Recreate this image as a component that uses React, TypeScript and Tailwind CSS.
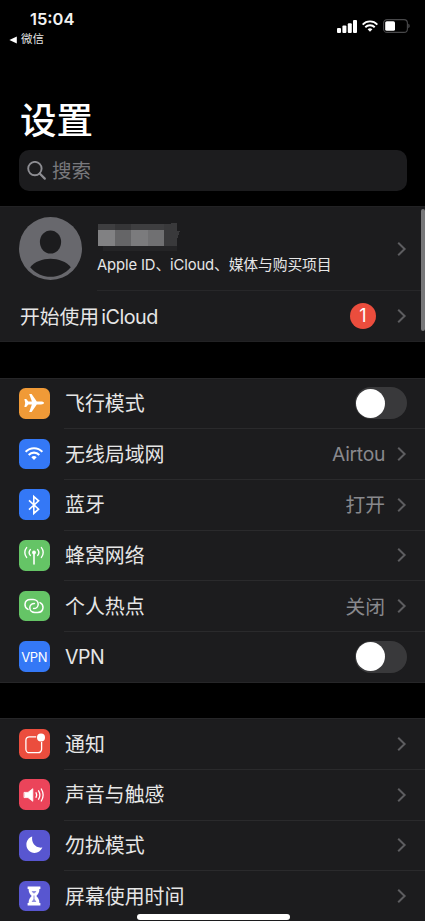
import React from "react";

type RowItem = {
  label: string;
  icon: React.ReactNode;
  color: string;
  value?: string;
  toggle?: boolean;
};

function Chevron() {
  return (
    <svg className="h-[16px] w-[10px] flex-none" viewBox="0 0 10 16" fill="none">
      <path d="M1.2 1.8L7.6 8L1.2 14.2" stroke="#5d5d60" strokeWidth="2" />
    </svg>
  );
}

function Toggle() {
  return (
    <div className="flex h-8 w-[52px] flex-none items-center rounded-full bg-[#39393b] pl-[1px]">
      <div className="size-[29px] rounded-full bg-white" />
    </div>
  );
}

function WifiArcs({ className }: { className: string }) {
  return (
    <svg className={className} viewBox="0 0 18 13" fill="none">
      <path d="M0.7 4.9A11.4 11.4 0 0 1 17.3 4.9" stroke="white" strokeWidth="2.1" />
      <path d="M3.7 7.9A7.4 7.4 0 0 1 14.3 7.9" stroke="white" strokeWidth="2.1" />
      <path d="M6.3 10.2A3.9 3.9 0 0 1 11.7 10.2L9 12.9Z" fill="white" />
    </svg>
  );
}

const airplane = (
  <svg className="size-[30px]" viewBox="0 0 30 30" fill="white">
    <path d="M25 15C25 14.2 23.7 13.6 22 13.6H17.8L12.6 6H10.2L12.9 13.6H9.3L7.2 11.1H5.4L6.2 15L5.4 18.9H7.2L9.3 16.4H12.9L10.2 24H12.6L17.8 16.4H22C23.7 16.4 25 15.8 25 15Z" />
  </svg>
);

const bluetooth = (
  <svg className="size-[30px]" viewBox="0 0 30 30" fill="none">
    <path d="M10 10.4L19.6 19.2L14.8 23.4V6.6L19.6 10.8L10 19.6" stroke="white" strokeWidth="1.6" />
  </svg>
);

const cellular = (
  <svg className="size-[30px]" viewBox="0 0 30 30" fill="none" stroke="white" strokeWidth="1.4" strokeLinecap="round">
    <circle cx="15" cy="12.5" r="1.9" fill="white" stroke="none" />
    <path d="M15 13V24" strokeWidth="1.6" />
    <path d="M11.3 9.6A4.6 4.6 0 0 0 11.3 15.4M18.7 9.6A4.6 4.6 0 0 1 18.7 15.4" />
    <path d="M7.6 7.6A7.6 7.6 0 0 0 7.6 17.4M22.4 7.6A7.6 7.6 0 0 1 22.4 17.4" />
  </svg>
);

const hotspot = (
  <svg className="size-[30px]" viewBox="0 0 30 30" fill="none" stroke="white" strokeWidth="1.5" strokeLinecap="round">
    <path d="M9 18.4C7 17.4 5.9 15.6 6 13.4C6.2 10.5 8.5 8.6 11.4 8.6H14.2C17 8.6 19.2 10.6 19.2 13.2C19.2 15.8 17 17.6 14.6 17.6" />
    <path d="M21 11.6C23 12.6 24.1 14.4 24 16.6C23.8 19.5 21.5 21.4 18.6 21.4H15.8C13 21.4 10.8 19.4 10.8 16.8C10.8 14.2 13 12.4 15.4 12.4" />
  </svg>
);

const notification = (
  <svg className="size-[30px]" viewBox="0 0 30 30" fill="none">
    <path d="M17.2 7.8H10.4A3.5 3.5 0 0 0 6.9 11.3V20.2A3.5 3.5 0 0 0 10.4 23.7H19.1A3.5 3.5 0 0 0 22.6 20.2V13" stroke="white" strokeWidth="1.3" />
    <circle cx="22" cy="8.5" r="4" fill="white" />
  </svg>
);

const sound = (
  <svg className="size-[30px]" viewBox="0 0 30 30" fill="none" stroke="white" strokeLinecap="round">
    <path d="M5.4 12.4H9L13.8 8.7V21.3L9 17.6H5.4Z" fill="white" stroke="white" strokeWidth="0.8" strokeLinejoin="round" />
    <path d="M17 12.7A4.5 4.5 0 0 1 17 17.3" strokeWidth="1.3" />
    <path d="M19.6 10.8A8 8 0 0 1 19.6 19.2" strokeWidth="1.3" />
    <path d="M22.3 9A11.5 11.5 0 0 1 22.3 21" strokeWidth="1.3" />
  </svg>
);

const moon = (
  <svg className="size-[30px]" viewBox="0 0 30 30" fill="white">
    <path d="M13.2 6.6C12.2 12.8 16.4 18.6 23.4 17.6C21.8 21.2 19 23 15.6 23C11 23 7.4 19.4 7.4 14.8C7.4 11 9.6 7.8 13.2 6.6Z" />
  </svg>
);

const hourglass = (
  <svg className="size-[30px]" viewBox="0 0 30 30" fill="white">
    <path d="M8.6 5.4H21.4V8H20.4C20.4 11.8 18.9 13.2 17.3 15C18.9 16.8 20.4 18.2 20.4 22H21.4V24.6H8.6V22H9.6C9.6 18.2 11.1 16.8 12.7 15C11.1 13.2 9.6 11.8 9.6 8H8.6Z" />
    <path d="M12.6 10H17.4L15.9 12.2H14.1ZM14.5 14.6H15.5V18L17.4 21H12.6L14.5 18Z" fill="#5856d0" opacity="0.65" />
  </svg>
);

const network: RowItem[] = [
  { label: "飞行模式", icon: airplane, color: "bg-[#f09a37]", toggle: true },
  { label: "无线局域网", icon: <WifiArcs className="h-[13px] w-[18px]" />, color: "bg-[#3478f6]", value: "Airtou" },
  { label: "蓝牙", icon: bluetooth, color: "bg-[#3478f6]", value: "打开" },
  { label: "蜂窝网络", icon: cellular, color: "bg-[#65c466]" },
  { label: "个人热点", icon: hotspot, color: "bg-[#65c466]", value: "关闭" },
  {
    label: "VPN",
    icon: <span className="pt-[1px] text-[13px] leading-none tracking-[-0.3px] text-white">VPN</span>,
    color: "bg-[#3478f6]",
    toggle: true,
  },
];

const general: RowItem[] = [
  { label: "通知", icon: notification, color: "bg-[#eb4d3d]" },
  { label: "声音与触感", icon: sound, color: "bg-[#eb445a]" },
  { label: "勿扰模式", icon: moon, color: "bg-[#5856d0]" },
  { label: "屏幕使用时间", icon: hourglass, color: "bg-[#5856d0]" },
];

function Row({ item, last }: { item: RowItem; last: boolean }) {
  return (
    <div className={`flex pl-[19px] ${last ? "h-[50px]" : "h-[50.7px]"}`}>
      <div className={`mt-[9.5px] flex size-[30.5px] flex-none items-center justify-center rounded-[6.5px] ${item.color}`}>
        {item.icon}
      </div>
      <div
        className={`ml-[14.5px] flex flex-1 items-center pr-[18px] pl-[1px] ${last ? "" : "border-b border-[#2a2a2c]"}`}
      >
        <span
          className={`flex-1 pt-[1px] leading-6 text-[#e6e6e6] ${
            item.label === "VPN" ? "text-[19.5px] tracking-[-0.4px]" : "text-[19.9px]"
          }`}
        >
          {item.label}
        </span>
        {item.value && (
          <span
            className={`mr-[12px] leading-6 text-[#89898d] ${
              item.value === "Airtou" ? "text-[19.3px] tracking-[-0.3px]" : "pt-[1px] text-[19.8px]"
            }`}
          >
            {item.value}
          </span>
        )}
        {item.toggle ? <Toggle /> : <Chevron />}
      </div>
    </div>
  );
}

function Group({ items }: { items: RowItem[] }) {
  return (
    <section className="border-y border-[#262628] bg-[#1c1c1e]">
      {items.map((item, index) => (
        <Row key={item.label} item={item} last={index === items.length - 1} />
      ))}
    </section>
  );
}

function StatusBar() {
  return (
    <div className="flex h-[50px] justify-between pr-[15px] pl-[9px]">
      <div className="pt-[9px]">
        <div className="pl-[21px] text-[16.5px] leading-5 font-semibold text-[#f2f2f2]">15:04</div>
        <div className="mt-[3px] flex items-center gap-[4px] text-[11.5px] leading-[15px] text-[#e6e6e6]">
          <svg className="h-[8px] w-[8px]" viewBox="0 0 8 8" fill="white">
            <path d="M0.4 4L7.8 0.6V7.4Z" />
          </svg>
          微信
        </div>
      </div>
      <div className="mt-[19px] flex h-[14px] items-center gap-[5px]">
        <svg className="h-[13px] w-[20px]" viewBox="0 0 20 13" fill="white">
          <rect x="0" y="8" width="4" height="5" rx="1" />
          <rect x="5.4" y="5.6" width="4" height="7.4" rx="1" />
          <rect x="10.8" y="3.2" width="4" height="9.8" rx="1" />
          <rect x="16" y="0" width="4" height="13" rx="1" />
        </svg>
        <WifiArcs className="h-[12px] w-[16px]" />
        <svg className="h-[14px] w-[27px]" viewBox="0 0 27 14" fill="none">
          <rect x="0.6" y="0.6" width="23.8" height="12.8" rx="3.5" stroke="#48484a" strokeWidth="1.1" />
          <rect x="2.2" y="2.2" width="9.8" height="9.6" rx="1.6" fill="white" />
          <path d="M25.4 4.8C27 5.4 27 8.6 25.4 9.2Z" fill="#58585a" />
        </svg>
      </div>
    </div>
  );
}

export default function App() {
  return (
    <main className="relative h-[921px] w-[425px] overflow-hidden bg-black font-['Inter','Noto_Sans_CJK_SC',sans-serif]">
      <StatusBar />

      <header className="h-[156px] pt-[49px] pr-[18px] pl-[19px]">
        <h1 className="pl-[1px] text-[36.5px] leading-[44px] font-medium text-white">设置</h1>
        <div className="mt-[7px] flex h-[41px] items-center rounded-[10px] bg-[#1c1c1e] pl-[8px]">
          <svg className="size-[20px]" viewBox="0 0 20 20" fill="none" stroke="#8d8d92" strokeWidth="1.9">
            <circle cx="7.9" cy="7.6" r="6.7" />
            <path d="M12.7 12.5L17.8 17.6" strokeWidth="2.2" strokeLinecap="round" />
          </svg>
          <span className="ml-[5px] pt-[1px] text-[19.5px] leading-6 text-[#78787c]">搜索</span>
        </div>
      </header>

      {/* Account */}
      <section className="h-[136px] border-y border-[#222224] bg-[#1c1c1e] pl-[19px]">
        <div className="flex h-[84px]">
          <svg className="mt-[10px] size-[63px] flex-none" viewBox="0 0 63 63">
            <circle cx="31.5" cy="31.5" r="31.5" fill="#68686d" />
            <ellipse cx="31.5" cy="25" rx="10.6" ry="11.6" fill="#1c1c1e" />
            <path d="M11.2 50.2C20 38.8 43 38.8 51.8 50.2C41 63 22 63 11.2 50.2Z" fill="#1c1c1e" />
          </svg>
          <div className="ml-[15px] flex flex-1 items-center border-b border-[#272729] pr-[18px]">
            <div className="h-full flex-1 pt-[16px]">
              <svg className="ml-[1px] h-[29px] w-[83px]" viewBox="0 0 83 29" shapeRendering="crispEdges">
                <path d="M0 1H66V7H0Z" fill="#3e3e40" />
                <path d="M17 1H33V7H17Z" fill="#353537" />
                <path d="M0 7H17V23H0Z" fill="#818183" />
                <path d="M17 7H33V23H17Z" fill="#656567" />
                <path d="M33 7H50V23H33Z" fill="#7b7b7d" />
                <path d="M50 7H66V23H50Z" fill="#707072" />
                <path d="M66 1L79 0V8H82L79 17V23H66Z" fill="#39393b" />
                <path d="M5 23H79V28H5Z" fill="#242426" />
              </svg>
              <p className="mt-[3px] text-[14.8px] leading-5 tracking-[-0.12px] whitespace-nowrap text-[#e6e6e6]">
                Apple ID、iCloud、媒体与购买项目
              </p>
            </div>
            <Chevron />
          </div>
        </div>
        <div className="flex h-[50px] items-center pr-[18px] pl-[1px]">
          <span className="flex-1 pt-[1px] text-[19.8px] leading-6 text-[#e6e6e6]">
            开始使用<span className="ml-[2px] tracking-[-0.5px]">iCloud</span>
          </span>
          <span className="mr-[21px] flex size-[26px] items-center justify-center rounded-full bg-[#eb4d3d] text-[18px] leading-none text-white">
            1
          </span>
          <Chevron />
        </div>
      </section>

      <div className="mt-[35.5px]">
        <Group items={network} />
      </div>
      <div className="mt-[35.3px]">
        <Group items={general} />
      </div>

      {/* Scroll bar and home indicator */}
      <div className="absolute top-[209px] right-0 h-[122px] w-[4px] rounded-full bg-[#777779]" />
      <div className="absolute top-[914px] left-[137px] h-[6px] w-[153px] rounded-full bg-white" />
    </main>
  );
}
